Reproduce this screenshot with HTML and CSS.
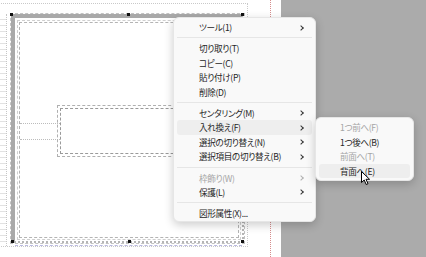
FILE: index.html
```html
<!DOCTYPE html>
<html lang="ja">
<head>
  <meta charset="UTF-8">
  <meta name="viewport" content="width=device-width, initial-scale=1">
  <title>図形メニュー</title>
  <link rel="stylesheet" href="styles.css">
</head>
<body>
  <div class="screen">
    <div class="sheet">
      <div class="guide guide-top"></div>
      <div class="guide guide-left"></div>
      <div class="shape frame">
        <span class="handle h-tl"></span>
        <span class="handle h-tc"></span>
        <span class="handle h-tr"></span>
        <span class="handle h-bl"></span>
        <span class="handle h-bc"></span>
        <span class="handle h-br"></span>
      </div>
      <div class="shape frame-inner"></div>
      <div class="shape label-box"></div>
      <div class="shape text-box"></div>
      <div class="margin-line"></div>
    </div>
    <div class="desk"></div>

    <ul class="menu main-menu">
      <li class="item has-sub">ツール(1)</li>
      <li class="sep"></li>
      <li class="item">切り取り(T)</li>
      <li class="item">コピー(C)</li>
      <li class="item">貼り付け(P)</li>
      <li class="item">削除(D)</li>
      <li class="sep"></li>
      <li class="item has-sub">センタリング(M)</li>
      <li class="item has-sub hover">入れ換え(F)</li>
      <li class="item has-sub">選択の切り替え(N)</li>
      <li class="item has-sub">選択項目の切り替え(B)</li>
      <li class="sep"></li>
      <li class="item has-sub disabled">枠飾り(W)</li>
      <li class="item has-sub">保護(L)</li>
      <li class="sep"></li>
      <li class="item">図形属性(X)...</li>
    </ul>

    <ul class="menu sub-menu">
      <li class="item disabled">1つ前へ(F)</li>
      <li class="item">1つ後へ(B)</li>
      <li class="item disabled">前面へ(T)</li>
      <li class="item hover">背面へ(E)</li>
    </ul>

    <svg class="cursor" width="10" height="15" viewBox="0 0 10 15">
      <path d="M0.5 0.5 L0.5 11.5 L3.2 9 L5.2 13.5 L7 12.7 L5 8.3 L8.6 8.3 Z" fill="#fff" stroke="#000" stroke-width="1" stroke-linejoin="round"/>
    </svg>
  </div>
</body>
</html>
```

FILE: styles.css
```css
html, body {
  margin: 0;
  padding: 0;
}
body {
  font-family: "Noto Sans CJK JP", "Noto Sans", sans-serif;
  background: #ababab;
}
.screen {
  position: relative;
  width: 426px;
  height: 257px;
  overflow: hidden;
  display: flex;
}
.sheet {
  position: relative;
  width: 281px;
  height: 257px;
  background: #fff;
}
.desk {
  flex: 1;
  background: #ababab;
}

/* canvas shapes */
.guide, .shape, .margin-line {
  position: absolute;
  box-sizing: border-box;
}
.guide-top {
  left: -4px;
  top: 3px;
  width: 252px;
  height: 244px;
  border: 1px dotted #c9c9c9;
}
.guide-left {
  left: 0;
  top: 14px;
  width: 7px;
  height: 232px;
  border-right: 1px dotted #c6c6c6;
  background: repeating-linear-gradient(to bottom, transparent 0, transparent 5px, #e2e2e2 5px, #e2e2e2 6px);
}
.frame {
  left: 11px;
  top: 14px;
  width: 233px;
  height: 229px;
  border-left: 4px solid #a9a9a9;
  border-top: 4px solid #a9a9a9;
  border-right: 2px dotted #b5b5b5;
  border-bottom: 2px dotted #b5b5b5;
  outline: 1px dashed #c2c2c2;
}
.frame::after {
  content: "";
  position: absolute;
  left: 0;
  right: 0;
  bottom: -5px;
  border-bottom: 1px dashed #b9b9e0;
}
.handle {
  position: absolute;
  width: 3px;
  height: 3px;
  background: #111;
}
.h-tl { left: -5px; top: -5px; }
.h-tc { left: 112px; top: -5px; }
.h-tr { right: -2px; top: -5px; }
.h-bl { left: -4px; bottom: -2px; }
.h-bc { left: 113px; bottom: -2px; }
.h-br { right: -2px; bottom: -2px; }
.frame-inner {
  left: 19px;
  top: 22px;
  width: 220px;
  height: 216px;
  border: 1px dashed #b4b4b4;
  outline: 1px dashed #cfcfcf;
  outline-offset: 1px;
}
.label-box {
  left: 20px;
  top: 123px;
  width: 40px;
  height: 17px;
  border-top: 1px dotted #bcbcbc;
  border-bottom: 1px dotted #bcbcbc;
}
.text-box {
  left: 57px;
  top: 105px;
  width: 190px;
  height: 52px;
  border: 1px dashed #b0b0b0;
  outline: 1px dashed #9a9a9a;
  outline-offset: -4px;
}
.margin-line {
  left: 270px;
  top: 0;
  height: 257px;
  border-left: 1px dotted #d58c8c;
}

/* context menus */
.menu {
  position: absolute;
  margin: 0;
  list-style: none;
  box-sizing: border-box;
  background: #f9f9f9;
  border: 1px solid #e6e6e6;
  border-radius: 6px;
  box-shadow: 0 3px 10px rgba(0, 0, 0, 0.2);
  font-size: 8.6px;
  letter-spacing: -0.35px;
  font-feature-settings: "palt";
  color: #262626;
}
.main-menu {
  left: 173px;
  top: 17px;
  width: 143px;
  padding: 2px 0 0;
}
.sub-menu {
  left: 315px;
  top: 117px;
  width: 99px;
  padding: 2px 0;
}
.item {
  position: relative;
  height: 14.4px;
  line-height: 15.4px;
  margin: 0 3px;
  padding-left: 22px;
  border-radius: 3px;
  white-space: nowrap;
}
.sub-menu .item {
  height: 14.5px;
  line-height: 15.5px;
  padding-left: 21px;
}
.item.hover {
  background: #eeeeee;
}
.item.disabled {
  color: #a5a5a5;
}
.has-sub::after {
  content: "";
  position: absolute;
  right: 9px;
  top: 5.5px;
  width: 3px;
  height: 3px;
  border-right: 1px solid #333;
  border-top: 1px solid #333;
  transform: rotate(45deg);
}
.has-sub.disabled::after {
  border-color: #b0b0b0;
}
.sep {
  height: 1px;
  margin: 3px 3px;
  background: #e6e6e6;
}

.cursor {
  position: absolute;
  left: 361px;
  top: 171px;
}
```
